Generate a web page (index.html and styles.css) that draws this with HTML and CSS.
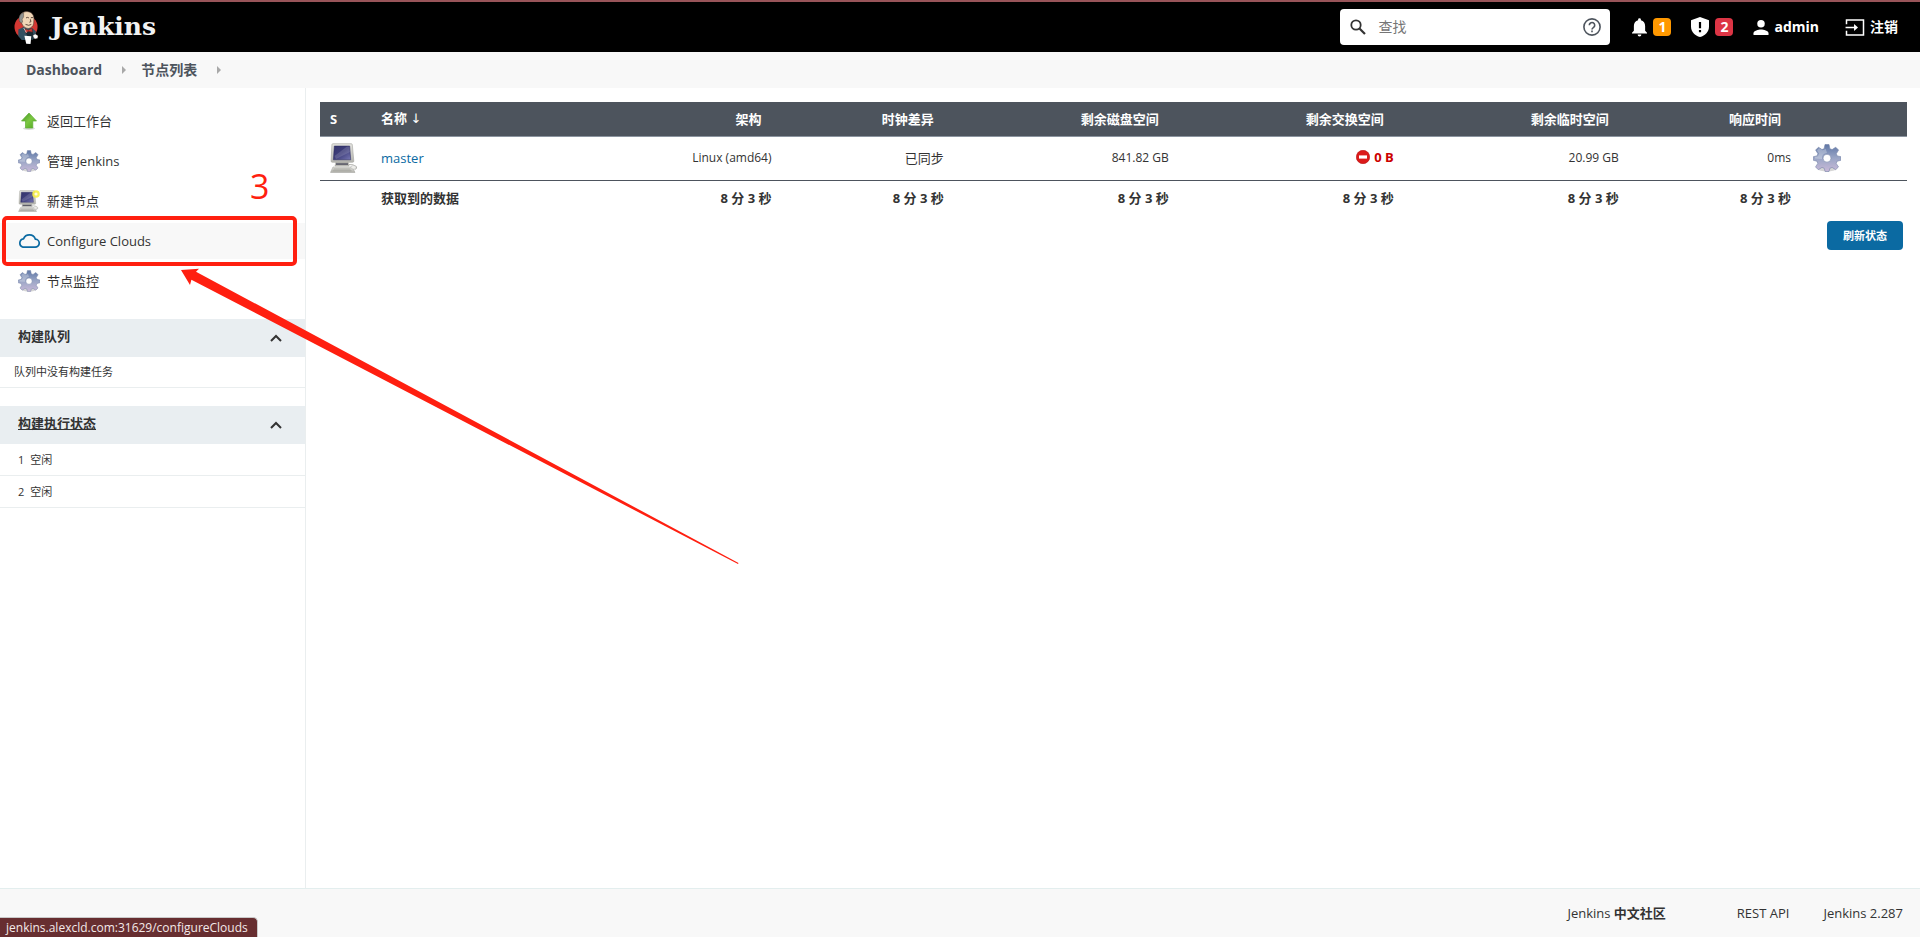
FILE: index.html
```html
<!DOCTYPE html>
<html lang="zh-CN">
<head>
<meta charset="utf-8">
<title>节点列表 [Jenkins]</title>
<link rel="stylesheet" href="styles.css">
</head>
<body>
<svg class="defs" width="0" height="0" aria-hidden="true">
  <defs>
    <linearGradient id="gear-fill" x1="0" y1="0" x2="0" y2="1">
      <stop offset="0" stop-color="#5f77a6"/><stop offset=".5" stop-color="#9aa6c6"/><stop offset="1" stop-color="#c9b9d8"/>
    </linearGradient>
    <linearGradient id="screen-fill" x1="0" y1="0" x2="1" y2="1">
      <stop offset="0" stop-color="#34346c"/><stop offset=".5" stop-color="#3f3f7c"/><stop offset="1" stop-color="#7777b4"/>
    </linearGradient>
    <linearGradient id="case-fill" x1="0" y1="0" x2="0" y2="1">
      <stop offset="0" stop-color="#e4e4e0"/><stop offset="1" stop-color="#b4b4ae"/>
    </linearGradient>
    <linearGradient id="arrow-fill" x1="0" y1="0" x2="1" y2="1">
      <stop offset="0" stop-color="#3f8f1e"/><stop offset=".5" stop-color="#7cc843"/><stop offset="1" stop-color="#4fa51f"/>
    </linearGradient>
  </defs>
  <symbol id="gear" viewBox="0 0 28 28">
    <ellipse cx="14" cy="25" rx="9" ry="2.5" fill="#000" opacity=".16"/>
    <path fill="url(#gear-fill)" stroke="#7483a8" stroke-width=".6" fill-rule="evenodd" d="M12 .5h4l.9 4.2 2.2.9L22.700 3.200l2.900 2.900-2.300 3.600.9 2.200 3.700.8v3.600l-3.700.9-1 2.200 2.300 3.500-2.800 2.800-3.600-2.300-2.200.9-.9 3.200h-3.900l-.9-3.200-2.200-.9-3.700 2.300-2.800-2.800L4.800 19.400l-.9-2.200L.3 16.300v-3.600l3.700-.8.9-2.200L2.600 6.100l2.900-2.900L9 5.600l2.100-.9zM14 10.200a4 4 0 1 0 0 8 4 4 0 1 0 0-8z"/>
    <path fill="#fff" opacity=".28" d="M4 6.500 6 4l3.500 2.300 3.300-1.300L14 9a5 5 0 0 0-5 6l-7-.5v-1.500l3-.8 1-2.800z"/>
  </symbol>
  <symbol id="computer" viewBox="0 0 28 30">
    <path fill="#c4c4be" stroke="#94948e" stroke-width=".5" d="M6 19h12l1 4H5z"/>
    <path fill="url(#case-fill)" stroke="#a3a39d" stroke-width=".6" d="M3 .7h18.200q1 0 1.100 1L23.800 18q.1 1.300-1.300 1.300H2.300Q1 19.300 1.100 18L1.900 1.700Q2 .7 3 .7z"/>
    <path fill="url(#screen-fill)" stroke="#24245a" stroke-width=".5" d="M4.300 3h15.400l1 13.800H3.400z"/>
    <path fill="#fff" opacity=".15" d="M4.500 13 17 3.500h2.500l.5 5.500L6 16z"/>
    <path fill="#5c5c68" d="M6 20.200h12v1.700H6z"/>
    <path fill="url(#case-fill)" stroke="#999993" stroke-width=".5" d="M3 24h19l3 5.400H.5z"/>
    <path stroke="#9c9c96" stroke-width=".8" d="M3.500 26h17M2.500 27.800h19"/>
    <path fill="none" stroke="#b5b5b0" stroke-width="1" d="M18.500 21.500q5-.5 8 2.200q1 2-2 3"/>
    <ellipse cx="23.500" cy="24.300" rx="2.600" ry="1.800" fill="#eeeeea" stroke="#aaa" stroke-width=".4"/>
  </symbol>
  <symbol id="chevron-up" viewBox="0 0 12 8">
    <path d="M1 7l5-5 5 5" fill="none" stroke="#333" stroke-width="2"/>
  </symbol>
</svg>

<header class="header">
  <a class="brand" href="#">
    <svg class="brand-logo" viewBox="0 0 26 35" aria-hidden="true">
      <circle cx="12.500" cy="17" r="12" fill="#d33833"/>
      <path fill="#335061" d="M4.500 19.500 10 17l9 1 3.500 3.500.5 5-4 4H8L4.500 26.500z"/>
      <path fill="#1b2a33" d="M9 17.500 13 21l6-2 1 5.500-1 6h-3l-4-8z"/>
      <path fill="#f0d6b7" stroke="#49332b" stroke-width=".6" d="M6.500 6C7.500 2 11 .7 14.500 1c4 .3 6 3.300 6.300 7l-.3 5c-.5 3.500-3 5.300-5.500 5.500-3.500 0-6-2.500-7-5.500-1.500-.3-2.500-2.500-2-4z"/>
      <path fill="#8f9290" stroke="#49332b" stroke-width=".4" d="M10 2Q6 3 5.200 7.500 5 11 7 12.500L9 12 8.500 9 10 6.500z"/>
      <path fill="none" stroke="#49332b" stroke-width=".9" d="M12.500 7.500q1.500-1 3 0M17.500 7.500q1.300-1 2.500 0M12 14.300q3.500 1.800 6 0M17 9l.6 2.500-1.600.5"/>
      <path fill="#d33833" stroke="#81231f" stroke-width=".5" d="m11.500 19 3.500 1.300 3.600-2 .5 4-3.800-.8-3.300 1.500z"/>
      <path fill="#fff" d="m10.800 26 7.200.5-.8 8.200-4.500-.2z"/>
      <path fill="#fff" stroke="#49332b" stroke-width=".3" d="m19.500 26 2.500-1.700 3 1.700-.5 2.800-3 .7z"/>
      <path fill="none" stroke="#fff" stroke-width=".7" d="m10 18 3 5"/>
    </svg>
    <span class="brand-name">Jenkins</span>
  </a>
  <div class="header-tools">
    <form class="search" role="search">
      <svg class="search-icon" viewBox="0 0 16 16" aria-hidden="true"><circle cx="6" cy="6" r="4.700" fill="none" stroke="#333" stroke-width="1.800"/><path d="m9.500 9.500 5.500 5.500" stroke="#333" stroke-width="2.200"/></svg>
      <input class="search-box" type="text" placeholder="查找" aria-label="查找">
      <a class="search-help" href="#" aria-label="帮助">
        <svg viewBox="0 0 18 18" aria-hidden="true"><circle cx="9" cy="9" r="8.100" fill="none" stroke="#4d545d" stroke-width="1.600"/><path d="M6.300 7.300a2.700 2.700 0 1 1 4.300 2.100C9.500 10.200 9 10.600 9 11.500" fill="none" stroke="#4d545d" stroke-width="1.600"/><path d="M8.200 12.600h1.600v1.700H8.200z" fill="#4d545d"/></svg>
      </a>
    </form>
    <a class="notice" href="#" aria-label="通知">
      <svg class="icon-bell" viewBox="0 0 16 20" aria-hidden="true"><path fill="#fff" d="M8 19.500a2 2 0 0 0 2-2H6a2 2 0 0 0 2 2zm6-6V8.500c0-3.100-1.600-5.600-4.500-6.300V1.500a1.500 1.500 0 0 0-3 0v.7C3.600 2.900 2 5.400 2 8.500v5l-2 2v1h16v-1z"/></svg>
      <span class="badge badge-info">1</span>
    </a>
    <a class="notice" href="#" aria-label="安全警告">
      <svg class="icon-shield" viewBox="0 0 18 20" aria-hidden="true"><path fill="#fff" d="M9 0 18 3.200v6.300C18 14.700 14.200 18.700 9 20 3.800 18.700 0 14.700 0 9.500V3.200z"/><path fill="#000" d="M7.900 5h2.200v6.300H7.900zM7.900 13h2.200v2.200H7.900z"/></svg>
      <span class="badge badge-alert">2</span>
    </a>
    <a class="account" href="#">
      <svg class="icon-user" viewBox="0 0 16 16" aria-hidden="true"><circle cx="8" cy="4" r="4" fill="#fff"/><path fill="#fff" d="M0 16v-2c0-2.700 5.300-4 8-4s8 1.300 8 4v2z"/></svg>
      <span>admin</span>
    </a>
    <a class="account" href="#">
      <svg class="icon-exit" viewBox="0 0 20 18" aria-hidden="true"><path fill="none" stroke="#fff" stroke-width="1.600" d="M1 5.500V1h18v16H1v-4.500"/><path stroke="#fff" stroke-width="1.600" d="M0 9h11"/><path fill="#fff" d="m9 5.300 4.200 3.700L9 12.700z"/></svg>
      <span>注销</span>
    </a>
  </div>
</header>

<nav class="breadcrumbs">
  <a href="#">Dashboard</a>
  <svg class="crumb-arrow" viewBox="0 0 4 8" aria-hidden="true"><path fill="#a8a8a8" d="M0 0l4 4-4 4z"/></svg>
  <a href="#">节点列表</a>
  <svg class="crumb-arrow" viewBox="0 0 4 8" aria-hidden="true"><path fill="#a8a8a8" d="M0 0l4 4-4 4z"/></svg>
</nav>

<div class="page">
  <aside class="side">
    <nav class="tasks">
      <a class="task" href="#">
        <svg class="task-icon" viewBox="0 0 22 22" aria-hidden="true"><ellipse cx="11" cy="18.500" rx="6" ry="1.500" fill="#000" opacity=".15"/><path fill="url(#arrow-fill)" stroke="#5fae35" stroke-width=".7" d="m11 3 7.500 8h-3.700v7H7.500v-7H3.500z"/></svg>
        <span>返回工作台</span>
      </a>
      <a class="task" href="#"><svg class="task-icon" aria-hidden="true"><use href="#gear"/></svg><span>管理 Jenkins</span></a>
      <a class="task" href="#">
        <svg class="task-icon" viewBox="0 0 22 22" aria-hidden="true"><use href="#computer" width="21" height="22"/><circle cx="18" cy="4" r="3.800" fill="#f7ee3c" opacity=".85"/><circle cx="18" cy="4" r="1.600" fill="#fffce0"/></svg>
        <span>新建节点</span>
      </a>
      <a class="task task-active" href="#">
        <svg class="task-icon" viewBox="0 0 22 22" aria-hidden="true"><path fill="none" stroke="#0b6aa2" stroke-width="1.700" stroke-linejoin="round" d="M5 17.200h12a4 4 0 0 0 .4-8A6.400 6.400 0 0 0 5.500 8.800 4.300 4.300 0 0 0 5 17.200z"/></svg>
        <span>Configure Clouds</span>
      </a>
      <a class="task" href="#"><svg class="task-icon" aria-hidden="true"><use href="#gear"/></svg><span>节点监控</span></a>
    </nav>

    <section class="pane">
      <div class="pane-head">
        <h2 class="pane-title">构建队列</h2>
        <button class="pane-toggle" type="button" aria-label="收起构建队列"><svg width="12" height="8" aria-hidden="true"><use href="#chevron-up"/></svg></button>
      </div>
      <p class="pane-row pane-empty">队列中没有构建任务</p>
    </section>

    <section class="pane">
      <div class="pane-head">
        <h2 class="pane-title"><a href="#">构建执行状态</a></h2>
        <button class="pane-toggle" type="button" aria-label="收起构建执行状态"><svg width="12" height="8" aria-hidden="true"><use href="#chevron-up"/></svg></button>
      </div>
      <p class="pane-row"><span class="executor">1</span>空闲</p>
      <p class="pane-row"><span class="executor">2</span>空闲</p>
    </section>
  </aside>

  <main class="main">
    <table class="nodes">
      <colgroup>
        <col class="col-status"><col><col class="col-arch"><col class="col-narrow"><col class="col-wide"><col class="col-wide"><col class="col-wide"><col class="col-narrow"><col class="col-action">
      </colgroup>
      <thead>
        <tr>
          <th>S</th>
          <th>名称 <span class="sort">↓</span></th>
          <th class="num">架构</th>
          <th class="num">时钟差异</th>
          <th class="num">剩余磁盘空间</th>
          <th class="num">剩余交换空间</th>
          <th class="num">剩余临时空间</th>
          <th class="num">响应时间</th>
          <th></th>
        </tr>
      </thead>
      <tbody>
        <tr class="node">
          <td><svg class="node-icon" aria-label="在线"><use href="#computer"/></svg></td>
          <td><a class="node-link" href="#">master</a></td>
          <td class="num value">Linux (amd64)</td>
          <td class="num">已同步</td>
          <td class="num value">841.82 GB</td>
          <td class="num"><span class="error"><svg class="error-icon" viewBox="0 0 14 14" aria-hidden="true"><circle cx="7" cy="7" r="6.700" fill="#db1a1a" stroke="#b80d0d" stroke-width=".6"/><path fill="#fff" d="M3 5.400h8v3.200H3z"/></svg>0 B</span></td>
          <td class="num value">20.99 GB</td>
          <td class="num value">0ms</td>
          <td><a class="configure" href="#" aria-label="配置"><svg class="gear-icon" aria-hidden="true"><use href="#gear"/></svg></a></td>
        </tr>
        <tr class="totals">
          <th></th>
          <th>获取到的数据</th>
          <th class="num">8 分 3 秒</th>
          <th class="num">8 分 3 秒</th>
          <th class="num">8 分 3 秒</th>
          <th class="num">8 分 3 秒</th>
          <th class="num">8 分 3 秒</th>
          <th class="num">8 分 3 秒</th>
          <th></th>
        </tr>
      </tbody>
    </table>
    <div class="actions"><button class="refresh" type="button">刷新状态</button></div>
  </main>
</div>

<footer class="footer">
  <a class="community" href="#">Jenkins <b>中文社区</b></a>
  <a class="api" href="#">REST API</a>
  <a href="#">Jenkins 2.287</a>
</footer>

<div class="status-url">jenkins.alexcld.com:31629/configureClouds</div>

<div class="mark-box"></div>
<span class="mark-number">3</span>
<svg class="mark-arrow" width="558" height="296" viewBox="181 268 558 296" aria-hidden="true"><path fill="#ff1f10" d="M181 270 199 268.700 196 271.700 738.500 563 738 564 191.400 279.700 190 285z"/></svg>
</body>
</html>
```

FILE: styles.css
```css
* {
  box-sizing: border-box;
}

body {
  margin: 0;
  min-height: 100vh;
  display: flex;
  flex-direction: column;
  position: relative;
  background: #fff;
  color: #333;
  font: 13px/18px "Open Sans", "Noto Sans CJK SC", sans-serif;
}

a {
  color: inherit;
  text-decoration: none;
}

svg {
  display: block;
  flex: none;
}

button {
  font: inherit;
  border: 0;
  padding: 0;
  cursor: pointer;
}

.defs {
  position: absolute;
}

/* Header */
.header {
  display: flex;
  align-items: center;
  justify-content: space-between;
  height: 52px;
  padding: 0 22px 0 14px;
  border-top: 2px solid #985459;
  background: #000;
  color: #fff;
}

.brand {
  display: flex;
  align-items: center;
  gap: 12px;
}

.brand-logo {
  width: 25px;
  height: 35px;
}

.brand-name {
  font: bold 25px/32px "DejaVu Serif", serif;
  color: #f2f2f2;
}

.header-tools {
  display: flex;
  align-items: center;
  font-size: 14px;
  font-weight: bold;
}

.search {
  display: flex;
  align-items: center;
  width: 270px;
  height: 36px;
  margin-right: 22px;
  padding: 0 9px 0 10px;
  border-radius: 4px;
  background: #fff;
}

.search-icon {
  width: 16px;
  height: 16px;
}

.search-box {
  flex: 1;
  min-width: 0;
  padding: 0 12px;
  border: 0;
  outline: 0;
  background: none;
  color: #333;
  font: 14px/20px "Open Sans", "Noto Sans CJK SC", sans-serif;
}

.search-box::placeholder {
  color: #757575;
}

.search-help svg {
  width: 18px;
  height: 18px;
}

.notice {
  display: flex;
  align-items: center;
  gap: 6px;
  margin-right: 20px;
}

.icon-bell {
  width: 15px;
  height: 19px;
}

.icon-shield {
  width: 18px;
  height: 20px;
}

.badge {
  width: 18px;
  border-radius: 4px;
  text-align: center;
}

.badge-info {
  background: #ff9800;
}

.badge-alert {
  background: #dc3545;
}

.account {
  display: flex;
  align-items: center;
  gap: 5px;
}

.account + .account {
  margin-left: 26px;
}

.icon-user {
  width: 16px;
  height: 15px;
}

.icon-exit {
  width: 20px;
  height: 17px;
}

/* Breadcrumbs */
.breadcrumbs {
  display: flex;
  align-items: center;
  height: 36px;
  padding: 0 26px;
  background: #f8f8f8;
  color: #4d545d;
  font-size: 14px;
  font-weight: bold;
}

.crumb-arrow {
  width: 4px;
  height: 8px;
  margin: 0 15px 0 20px;
}

/* Page */
.page {
  flex: 1;
  display: flex;
}

.side {
  flex: none;
  width: 306px;
  border-right: 1px solid #eaeeef;
}

.tasks {
  display: grid;
  gap: 4px;
  padding: 15px 0 20px;
}

.task {
  display: flex;
  align-items: center;
  gap: 7px;
  height: 36px;
  padding-left: 18px;
}

.task-active {
  background: #f8f8f8;
}

.task-icon {
  width: 22px;
  height: 22px;
}

.pane {
  margin-bottom: 18px;
}

.pane-head {
  display: flex;
  align-items: center;
  justify-content: space-between;
  height: 38px;
  padding: 0 23px 0 18px;
  background: #e9eef1;
}

.pane-title {
  margin: 0;
  padding-bottom: 4px;
  font-size: 13px;
  line-height: 18px;
}

.pane-title a {
  text-decoration: underline;
}

.pane-toggle {
  background: none;
}

.pane-row {
  display: flex;
  align-items: center;
  gap: 6px;
  height: 32px;
  margin: 0;
  padding-left: 18px;
  border-bottom: 1px solid #eaeeef;
  font-size: 11px;
}

.pane-empty {
  height: 31px;
  padding-left: 14px;
}

/* Node table */
.main {
  flex: 1;
  min-width: 0;
  padding: 14px 13px 14px 14px;
}

.nodes {
  width: 100%;
  table-layout: fixed;
  border-collapse: collapse;
}

.nodes th,
.nodes td {
  padding: 0 10px;
  text-align: left;
  white-space: nowrap;
}

.nodes .num {
  text-align: right;
}

.nodes thead tr {
  height: 34px;
  background: #4d545d;
  color: #fff;
}

.nodes thead .num {
  padding-right: 20px;
}

.nodes .node {
  height: 44px;
  border-top: 1px solid #8b949f;
  border-bottom: 1px solid #4d545d;
}

.nodes .value {
  font-size: 12px;
}

.nodes .totals {
  height: 35px;
}

.sort {
  font-family: "DejaVu Sans", sans-serif;
  font-weight: normal;
}

.col-status {
  width: 51px;
}

.col-arch {
  width: 13%;
}

.col-narrow {
  width: 10.85%;
}

.col-wide {
  width: 14.18%;
}

.col-action {
  width: 106px;
}

.node-icon {
  width: 28px;
  height: 30px;
}

.node-link {
  color: #0b6aa2;
}

.error {
  display: inline-flex;
  align-items: center;
  gap: 4px;
  color: #c00;
  font-weight: bold;
}

.error-icon {
  width: 14px;
  height: 14px;
}

.configure {
  display: inline-block;
  margin-left: 2px;
  vertical-align: middle;
}

.gear-icon {
  width: 28px;
  height: 28px;
}

.actions {
  display: flex;
  justify-content: flex-end;
  padding: 6px 4px 0;
}

.refresh {
  height: 29px;
  padding: 0 16px;
  border-radius: 4px;
  background: #0b6aa2;
  color: #fff;
  font-size: 11px;
  font-weight: bold;
}

/* Footer */
.footer {
  display: flex;
  align-items: center;
  justify-content: flex-end;
  height: 49px;
  padding-right: 17px;
  border-top: 1px solid #e3eeee;
  background: #f8f8f8;
}

.community {
  margin-right: 71px;
}

.api {
  margin-right: 34px;
}

/* Browser link preview */
.status-url {
  position: absolute;
  left: 0;
  bottom: 0;
  padding: 0 9px 0 6px;
  border-top: 1px solid #c9c9c9;
  border-right: 1px solid #c9c9c9;
  border-radius: 0 5px 0 0;
  background: #672e30;
  color: #f3e9e9;
  font-size: 12px;
  line-height: 19px;
}

/* Annotations over the page */
.mark-box {
  position: absolute;
  left: 2px;
  top: 216px;
  width: 295px;
  height: 50px;
  border: 4px solid #ff1f10;
  border-radius: 5px;
}

.mark-number {
  position: absolute;
  left: 250px;
  top: 166px;
  color: #ff1f10;
  font-size: 34px;
  line-height: 40px;
}

.mark-arrow {
  position: absolute;
  left: 181px;
  top: 268px;
}
```
